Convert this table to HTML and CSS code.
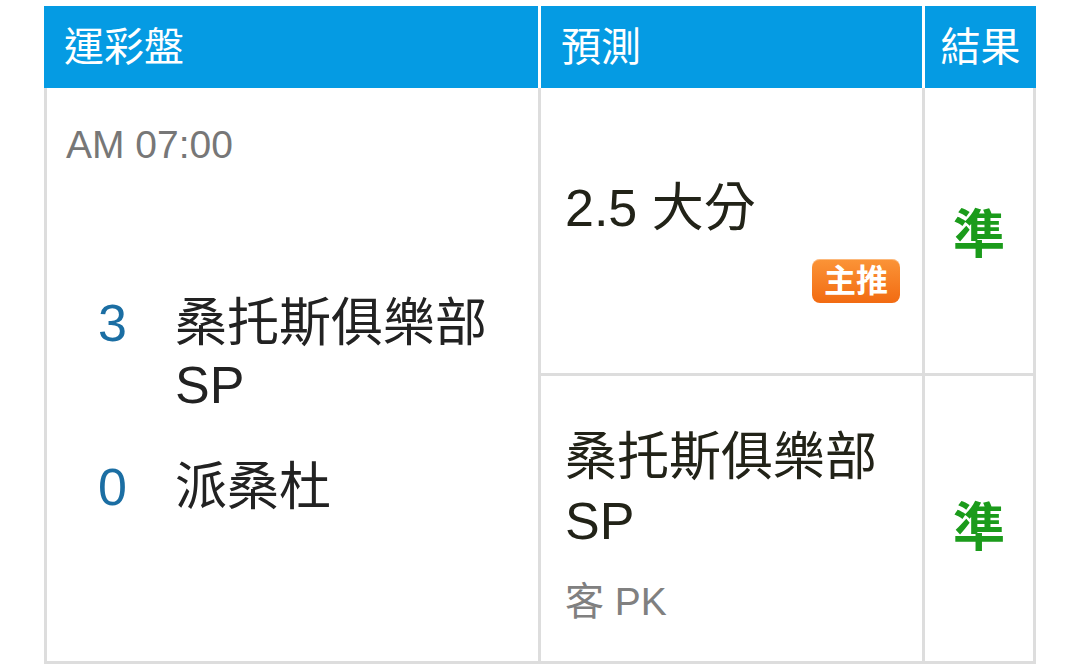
FILE: index.html
```html
<!DOCTYPE html>
<html lang="zh-Hant">
<head>
<meta charset="utf-8">
<title>運彩盤</title>
<link rel="stylesheet" href="styles.css">
</head>
<body>
<div class="board">
  <div class="head">
    <div class="hcell">運彩盤</div>
    <div class="hcell">預測</div>
    <div class="hcell hcell-center">結果</div>
  </div>
  <div class="grid">
    <div class="match">
      <div class="time">AM 07:00</div>
      <div class="teams">
        <div class="team"><span class="score">3</span><span class="name">桑托斯俱樂部 SP</span></div>
        <div class="team"><span class="score">0</span><span class="name">派桑杜</span></div>
      </div>
    </div>
    <div class="pick pick-top">
      <div class="pick-text">2.5 大分</div>
      <span class="badge">主推</span>
    </div>
    <div class="result">準</div>
    <div class="pick pick-bottom">
      <div class="pick-text">桑托斯俱樂部 SP</div>
      <div class="pick-sub">客 PK</div>
    </div>
    <div class="result result-bottom">準</div>
  </div>
</div>
</body>
</html>
```
FILE: styles.css
```css
* { box-sizing: border-box; }

html, body {
  margin: 0;
  padding: 0;
  background: #ffffff;
}

body {
  font-family: "Liberation Sans", "Noto Sans CJK TC", sans-serif;
  padding: 6px 44px 0 44px;
}

.board {
  width: 992px;
}

.head {
  display: grid;
  grid-template-columns: 494px 381px 111px;
  column-gap: 3px;
  background: #ffffff;
}

.hcell {
  background: #059be3;
  color: #ffffff;
  font-size: 40px;
  height: 82px;
  line-height: 82px;
  padding-left: 20px;
}

.hcell-center {
  padding-left: 0;
  text-align: center;
}

.grid {
  display: grid;
  grid-template-columns: 491px 381px 108px;
  grid-template-rows: 285px 285px;
  gap: 3px;
  padding: 0 3px 3px 3px;
  background: #dddddd;
}

.match {
  grid-row: span 2;
  background: #ffffff;
  padding: 34px 20px 0 19px;
}

.time {
  font-size: 39px;
  line-height: 46px;
  color: #777777;
}

.teams {
  margin-top: 124px;
  padding-left: 32px;
}

.team {
  display: flex;
  align-items: baseline;
  font-size: 52px;
  line-height: 62px;
}

.team + .team {
  margin-top: 40px;
}

.score {
  flex: 0 0 77px;
  color: #1b6ea3;
}

.name {
  color: #222222;
  min-width: 0;
}

.pick {
  background: #ffffff;
  display: flex;
  flex-direction: column;
  justify-content: center;
  padding: 0 22px 0 24px;
}

.pick-top {
  padding-top: 18px;
}

.pick-bottom {
  padding-top: 12px;
}

.pick-text {
  font-size: 52px;
  line-height: 64px;
  color: #222318;
}

.pick-top .pick-text {
  line-height: 62px;
}

.badge {
  align-self: flex-end;
  margin-top: 20px;
  height: 44px;
  line-height: 44px;
  padding: 0 12px;
  border-radius: 8px;
  background: linear-gradient(#fb9437, #f26b12);
  box-shadow: inset 0 1px 0 rgba(255, 255, 255, 0.35);
  color: #ffffff;
  font-size: 32px;
  font-weight: 700;
}

.pick-sub {
  margin-top: 26px;
  font-size: 39px;
  line-height: 46px;
  color: #808080;
}

.result {
  background: #ffffff;
  display: flex;
  align-items: center;
  justify-content: center;
  font-size: 52px;
  font-weight: 700;
  color: #1b9b1b;
}

.result-bottom {
  padding-top: 9px;
}
```
